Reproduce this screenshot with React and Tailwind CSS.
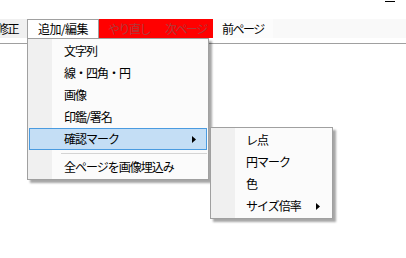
const FONT = { fontFamily: '"Noto Sans CJK JP", "Noto Sans", sans-serif' };

const MAIN_ITEMS = ['文字列', '線・四角・円', '画像', '印鑑/署名'];
const SUB_ITEMS = ['レ点', '円マーク', '色'];

function Arrow() {
  return (
    <svg width="4" height="7" viewBox="0 0 4 7" className="block">
      <path d="M0 0 L4 3.5 L0 7 Z" fill="#000" />
    </svg>
  );
}

function Item({ label, arrow, active, textLeft }) {
  return (
    <div
      className={`relative flex h-[22px] items-center border ${
        active ? 'border-[#4a9be0] bg-[#c4def5]' : 'border-transparent'
      }`}
    >
      <span className="whitespace-nowrap text-[12px] leading-none tracking-[-1px] text-black" style={{ paddingLeft: textLeft }}>
        {label}
      </span>
      {arrow && <div className="ml-auto mr-[10px]"><Arrow /></div>}
    </div>
  );
}

export default function App() {
  return (
    <div className="relative h-[258px] w-[406px] overflow-hidden bg-white" style={FONT}>
      <div className="flex h-[19px] justify-end pr-[11px] pt-[1px]">
        <div className="h-[1px] w-[10px] bg-black" />
      </div>

      <div className="flex h-[19px] whitespace-nowrap bg-[#f9f9f9] text-[12px] leading-none tracking-[-1.5px]">
        <div className="flex w-[27px] shrink-0 items-center justify-end overflow-hidden bg-[#f0f0f0] pr-[9px] text-black">
          <span className="shrink-0">修正</span>
        </div>
        <div className="flex w-[72px] shrink-0 items-center justify-center border-x border-t border-[#a0a0a0] bg-white tracking-[-0.5px] text-black">
          追加/編集
        </div>
        <div className="flex w-[114px] shrink-0 items-center overflow-hidden bg-[#ff0000] text-[#b03a3a]">
          <span className="ml-[9px] w-[57px] shrink-0">やり直し</span>
          <span className="shrink-0">次ページ</span>
        </div>
        <div className="flex w-[60px] shrink-0 items-center justify-center bg-[#fcfcfc] text-black">前ページ</div>
      </div>

      <div className="mt-[5px] h-[1px] bg-[#a0a0a0]" />

      <div className="absolute left-[27px] top-[38px] h-[142px] w-[182px] border border-[#a0a0a0] bg-[#fbfbfb] shadow-[3px_3px_2px_rgba(0,0,0,0.35)]">
        <div className="absolute bottom-0 left-0 top-0 w-[24px] bg-[#f0f0f0]" />
        <div className="relative px-[1px] pt-[1px]">
          {MAIN_ITEMS.map((t) => (
            <Item key={t} label={t} textLeft={34} />
          ))}
          <Item label="確認マーク" textLeft={34} arrow active />
          <div className="flex h-[6px] items-center pl-[32px]">
            <div className="h-[1px] w-full bg-[#d4d4d4]" />
          </div>
          <Item label="全ページを画像埋込み" textLeft={34} />
        </div>
      </div>

      <div className="absolute left-[210px] top-[127px] h-[92px] w-[123px] border border-[#a0a0a0] bg-[#fbfbfb] shadow-[3px_3px_2px_rgba(0,0,0,0.35)]">
        <div className="absolute bottom-0 left-0 top-0 w-[24px] bg-[#f0f0f0]" />
        <div className="relative px-[1px] pt-[1px]">
          {SUB_ITEMS.map((t) => (
            <Item key={t} label={t} textLeft={33} />
          ))}
          <Item label="サイズ倍率" textLeft={33} arrow />
        </div>
      </div>
    </div>
  );
}
